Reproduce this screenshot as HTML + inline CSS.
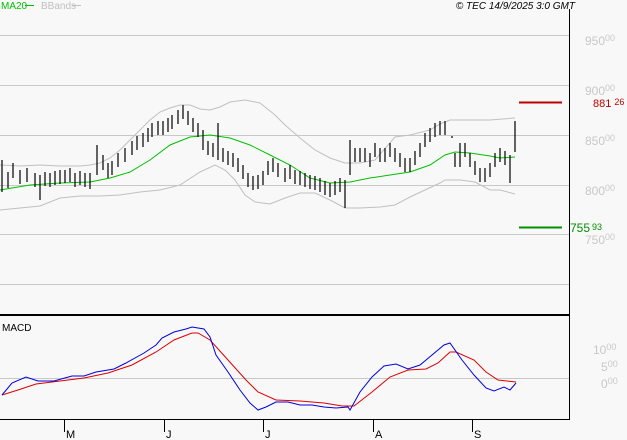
<!DOCTYPE html>
<html><head><style>
html,body{margin:0;padding:0;background:#f8f8f8;width:627px;height:440px;overflow:hidden}
svg{display:block}
text{font-family:"Liberation Sans",sans-serif}
</style></head><body>
<svg width="627" height="440" xmlns="http://www.w3.org/2000/svg">
<rect width="627" height="440" fill="#f8f8f8"/>
<g stroke="#c8c8c8" stroke-width="1">
<line x1="0" y1="35.5" x2="569" y2="35.5"/>
<line x1="0" y1="85.5" x2="569" y2="85.5"/>
<line x1="0" y1="135.5" x2="569" y2="135.5"/>
<line x1="0" y1="185.5" x2="569" y2="185.5"/>
<line x1="0" y1="234.5" x2="569" y2="234.5"/>
<line x1="0" y1="284.5" x2="569" y2="284.5"/>
<line x1="0" y1="378.5" x2="569" y2="378.5"/>
</g>
<g fill="none" stroke="#c0c0c0" stroke-width="1">
<polyline points="0,165 20,166 40,165 60,166 80,166 90,165 100,163 110,158 120,150 130,140 140,130 150,120 160,112 170,108 180,105 190,105 200,109 210,110 220,107 230,102 245,100 260,103 275,115 285,125 300,138 315,150 330,158 345,163 360,163 375,160 395,137 410,135 430,130 440,124 450,120 470,120 490,120 515,118"/>
<polyline points="0,210 20,208 40,206 60,198 80,196 100,196 120,195 140,192 160,190 180,185 200,172 215,165 225,170 235,180 245,195 255,202 270,204 285,198 300,193 315,193 330,200 345,208 360,208 380,207 395,205 410,197 440,183 445,180 460,180 475,182 490,190 500,190 515,194"/>
</g>
<polyline fill="none" stroke="#00c000" stroke-width="1" points="0,190 30,185 60,183 90,182 110,178 130,172 150,160 170,145 190,137 210,135 230,138 250,145 270,155 290,165 310,178 330,183 350,182 370,178 390,175 410,172 430,165 445,155 455,152 470,153 490,156 500,158 515,157"/>
<path stroke="#000" stroke-width="1.2" fill="none" d="M2 160V192M8 172V188M13 163V178M20 170V184M27 168V182M35 173V187M40 175V200M45 172V186M50 173V187M55 171V185M60 170V184M65 170V183M70 168V182M75 173V187M80 171V185M85 173V187M90 173V189M97 145V175M103 155V170M108 163V178M112 161V175M118 153V167M125 148V162M132 141V155M137 136V150M143 133V147M148 128V142M152 123V137M158 121V135M163 121V135M168 118V132M172 115V129M178 110V124M183 105V119M188 111V125M193 118V132M198 123V137M203 130V150M208 141V155M213 143V157M218 123V160M223 148V162M228 151V165M233 153V167M238 158V172M243 165V179M248 173V187M253 176V190M258 175V189M263 171V185M268 161V175M273 158V172M278 163V177M285 168V182M290 165V179M295 170V184M300 171V185M305 173V187M310 175V189M315 176V190M320 178V192M325 181V195M330 183V197M335 181V195M340 178V192M345 180V208M350 140V175M355 148V162M360 148V162M365 148V162M370 153V167M375 143V157M380 148V162M385 148V162M390 143V157M395 148V162M400 153V167M405 158V172M410 158V172M415 151V165M420 143V157M425 133V147M430 128V142M435 123V137M440 121V135M445 121V135M452 136V138M455 153V167M460 143V167M465 143V157M470 153V167M475 161V175M480 168V182M485 168V182M490 163V177M495 153V167M500 148V162M505 151V165M510 155V183M515 121V152"/>
<line x1="519" y1="102.5" x2="562" y2="102.5" stroke="#c00000" stroke-width="2"/>
<line x1="519" y1="227.5" x2="562" y2="227.5" stroke="#009000" stroke-width="2"/>
<line x1="0" y1="315" x2="570" y2="315" stroke="#000" stroke-width="2"/>
<line x1="569.5" y1="9" x2="569.5" y2="420" stroke="#000" stroke-width="1"/>
<line x1="0" y1="419.5" x2="570" y2="419.5" stroke="#000" stroke-width="1"/>
<g stroke="#000" stroke-width="1"><line x1="64.5" y1="420" x2="64.5" y2="432"/><line x1="164.5" y1="420" x2="164.5" y2="432"/><line x1="263.5" y1="420" x2="263.5" y2="432"/><line x1="373.5" y1="420" x2="373.5" y2="432"/><line x1="472.5" y1="420" x2="472.5" y2="432"/></g>
<g font-size="11" fill="#000"><text x="66" y="438">M</text><text x="166" y="438">J</text><text x="265" y="438">J</text><text x="375" y="438">A</text><text x="474" y="438">S</text></g>
<polyline fill="none" stroke="#e00000" stroke-width="1" points="2,395 18,390 36,384 60,381 84,378 108,373 132,365 156,352 174,340 192,333 198,333 210,340 228,360 246,380 258,392 276,400 300,401 324,403 342,406 354,406 372,392 390,377 408,370 426,369 438,363 450,352 456,352 474,360 486,372 498,380 516,382"/>
<polyline fill="none" stroke="#0000e0" stroke-width="1" points="2,395 12,383 26,377 38,381 54,381 72,376 84,376 96,372 114,369 126,363 144,353 156,345 162,338 174,332 186,329 192,327 204,329 210,337 216,355 228,372 240,390 250,403 258,410 266,407 276,402 288,402 300,405 312,405 324,407 336,408 348,407 350,410 360,392 372,377 384,366 396,364 408,369 420,365 432,355 444,345 450,343 462,360 474,375 486,388 494,391 504,387 510,390 516,383"/>
<text x="2" y="331" font-size="10" fill="#000">MACD</text>
<text x="1" y="9" font-size="10" fill="#00c000">MA20</text><line x1="25" y1="5.5" x2="34" y2="5.5" stroke="#00c000"/>
<text x="41" y="9" font-size="10" fill="#c0c0c0">BBands</text><line x1="72" y1="5.5" x2="81" y2="5.5" stroke="#c0c0c0"/>
<text x="575" y="9" font-size="10" font-style="italic" fill="#000" text-anchor="end">© TEC 14/9/2025 3:0 GMT</text>
<g fill="#c8c8c8" font-size="12">
<text x="585" y="45">950<tspan font-size="9" dy="-4">00</tspan></text>
<text x="585" y="95">900<tspan font-size="9" dy="-4">00</tspan></text>
<text x="585" y="145">850<tspan font-size="9" dy="-4">00</tspan></text>
<text x="585" y="195">800<tspan font-size="9" dy="-4">00</tspan></text>
<text x="585" y="244">750<tspan font-size="9" dy="-4">00</tspan></text>
<text x="593" y="354">10<tspan font-size="9" dy="-4">00</tspan></text>
<text x="601" y="371">5<tspan font-size="9" dy="-4">00</tspan></text>
<text x="601" y="388">0<tspan font-size="9" dy="-4">00</tspan></text>
</g>
<text x="593" y="107" font-size="11" fill="#c00000">881<tspan font-size="9" dx="3" dy="-2">26</tspan></text>
<text x="570" y="232" font-size="12" fill="#009000">755<tspan font-size="9" dx="2" dy="-2">93</tspan></text>
</svg>
</body></html>
